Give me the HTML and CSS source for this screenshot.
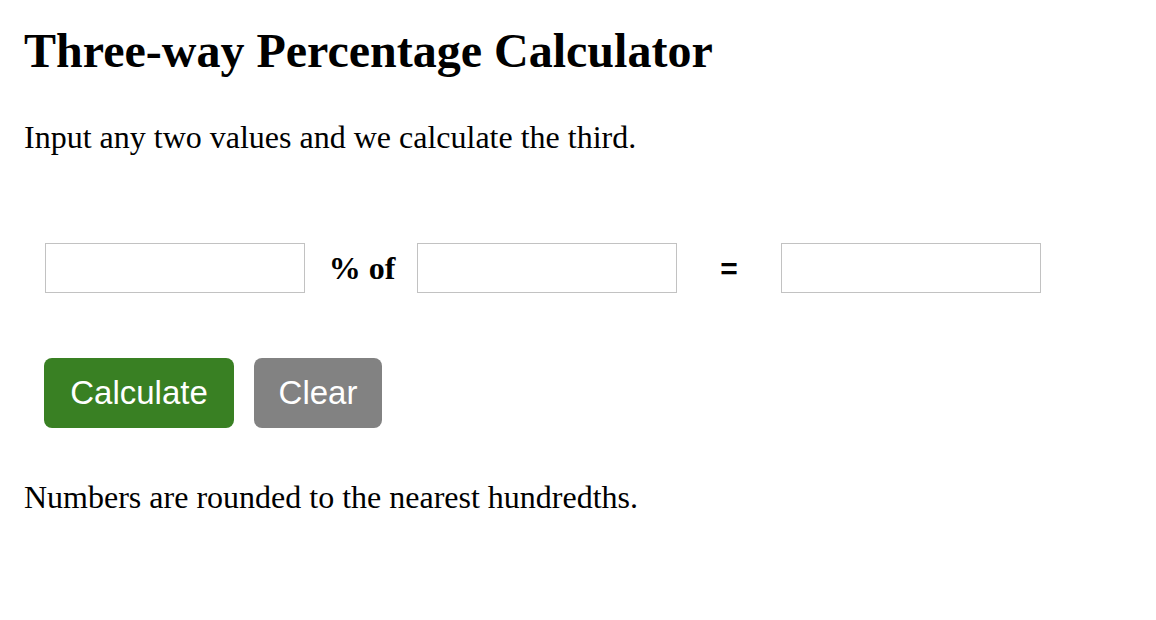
FILE: index.html
```html
<!DOCTYPE html>
<html lang="en">
<head>
<meta charset="utf-8">
<title>Three-way Percentage Calculator</title>
<link rel="stylesheet" href="styles.css">
</head>
<body>
<main class="page">
  <h1 class="title">Three-way Percentage Calculator</h1>
  <p class="intro">Input any two values and we calculate the third.</p>
  <div class="calc-row">
    <input class="field" type="text" aria-label="Percent">
    <span class="label label-of">% of</span>
    <input class="field" type="text" aria-label="Base value">
    <span class="label label-eq">=</span>
    <input class="field" type="text" aria-label="Result">
  </div>
  <div class="actions">
    <button class="btn btn-calc" type="button">Calculate</button>
    <button class="btn btn-clear" type="button">Clear</button>
  </div>
  <p class="note">Numbers are rounded to the nearest hundredths.</p>
</main>
</body>
</html>
```
FILE: styles.css
```css
html, body {
  margin: 0;
  padding: 0;
  background: #ffffff;
}
body {
  font-family: "Liberation Serif", "Times New Roman", serif;
  color: #000000;
}
.page {
  padding: 0 24px;
  display: flex;
  flex-direction: column;
  align-items: flex-start;
}
.title {
  font-size: 48px;
  font-weight: bold;
  line-height: 56px;
  margin: 23px 0 0 0;
}
.intro {
  font-size: 32px;
  line-height: 36px;
  margin: 40px 0 0 0;
}
.calc-row {
  display: flex;
  align-items: center;
  margin: 88px 0 0 21px;
}
.field {
  box-sizing: border-box;
  width: 260px;
  height: 50px;
  border: 1px solid #c2c2c2;
  border-radius: 0;
  padding: 0 8px;
  font-size: 24px;
  background: #ffffff;
  outline: none;
}
.label {
  display: flex;
  justify-content: center;
  align-items: center;
}
.label-of {
  width: 112px;
  font-size: 32px;
  font-weight: bold;
  padding-left: 2px;
  box-sizing: border-box;
}
.label-eq {
  width: 104px;
  font-family: "Liberation Sans", Arial, sans-serif;
  font-size: 30px;
  font-weight: bold;
  padding-top: 2px;
}
.actions {
  display: flex;
  gap: 20px;
  margin: 65px 0 0 20px;
}
.btn {
  box-sizing: border-box;
  height: 70px;
  border: none;
  border-radius: 8px;
  color: #ffffff;
  font-family: "Liberation Sans", Arial, Helvetica, sans-serif;
  font-size: 33px;
  padding: 0 24px;
  cursor: pointer;
}
.btn-calc {
  width: 190px;
  background: #398023;
}
.btn-clear {
  width: 128px;
  background: #828282;
}
.note {
  font-size: 32px;
  line-height: 36px;
  margin: 51px 0 0 0;
}
```
